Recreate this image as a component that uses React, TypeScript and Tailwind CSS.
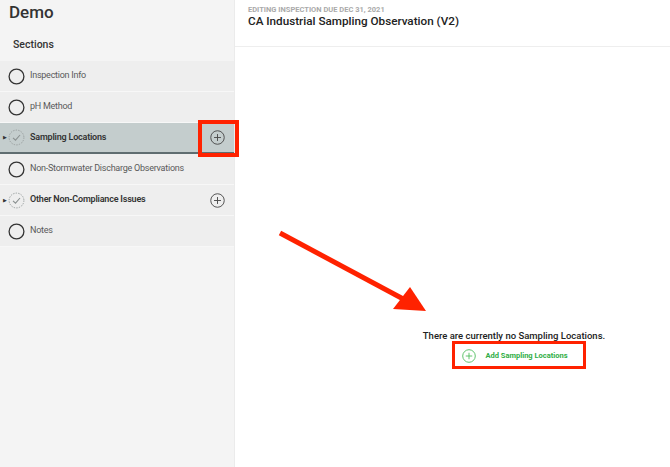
import React from "react";

const font = { fontFamily: "Roboto, 'Liberation Sans', sans-serif" };

function Circle() {
  return (
    <svg width="17" height="17" viewBox="0 0 17 17" className="shrink-0">
      <circle cx="8.5" cy="8.5" r="7.4" fill="none" stroke="#333" strokeWidth="1.3" />
    </svg>
  );
}

function DashCheck() {
  return (
    <svg width="17" height="17" viewBox="0 0 17 17" className="shrink-0">
      <circle cx="8.5" cy="8.5" r="7.4" fill="none" stroke="#9aa0a0" strokeWidth="1" strokeDasharray="1.4 1.2" />
      <path d="M5 8.8 L7.5 11.2 L12 6" fill="none" stroke="#8a9090" strokeWidth="1.1" />
    </svg>
  );
}

function PlusCircle({ color = "#4a4a4a", size = 15 }: { color?: string; size?: number }) {
  return (
    <svg width={size} height={size} viewBox="0 0 16 16" className="shrink-0">
      <circle cx="8" cy="8" r="7.2" fill="none" stroke={color} strokeWidth="1" />
      <path d="M8 4.3 V11.7 M4.3 8 H11.7" stroke={color} strokeWidth="1" />
    </svg>
  );
}

function Row({
  label,
  bold,
  expandable,
  selected,
  plus,
}: {
  label: string;
  bold?: boolean;
  expandable?: boolean;
  selected?: boolean;
  plus?: boolean;
}) {
  return (
    <div
      className={
        selected
          ? "relative flex items-center h-[31px] bg-[#c4cdcd] border-b-2 border-[#5f6d70]"
          : "relative flex items-center h-[31px] bg-[#eeeeee] border-b border-[#f7f7f7]"
      }
    >
      <div className="w-[8px] flex justify-center">
        {expandable && <span className="text-[5px] text-[#333] leading-none ml-[2px]">▶</span>}
      </div>
      {expandable ? <DashCheck /> : <Circle />}
      <span
        className={
          bold
            ? "ml-[5px] text-[9px] tracking-[-0.2px] font-semibold text-[#333]"
            : "ml-[5px] text-[9px] tracking-[-0.25px] text-[#5a5a5a]"
        }
      >
        {label}
      </span>
      {plus && (
        <div className="ml-auto mr-[9px] flex items-center">
          <PlusCircle />
        </div>
      )}
    </div>
  );
}

export default function App() {
  return (
    <div className="relative flex w-[670px] h-[467px] bg-white overflow-hidden" style={font}>
      <aside className="w-[235px] h-full bg-[#f4f4f4] border-r border-[#ebebeb] flex flex-col shrink-0">
        <div className="pl-[9px] pt-[1px] h-[26px] text-[17px] font-medium text-[#333] leading-[22px]">Demo</div>
        <div className="pl-[13px] pt-[11px] h-[35px] text-[10.5px] font-medium text-[#333]">Sections</div>
        <div className="flex flex-col">
          <Row label="Inspection Info" />
          <Row label="pH Method" />
          <Row label="Sampling Locations" bold expandable selected plus />
          <Row label="Non-Stormwater Discharge Observations" />
          <Row label="Other Non-Compliance Issues" bold expandable plus />
          <Row label="Notes" />
        </div>
      </aside>

      <main className="flex-1 flex flex-col">
        <header className="h-[47px] border-b border-[#eeeeee] pl-[13px] pt-[6px]">
          <div className="text-[7.5px] font-bold text-[#aaaaaa] uppercase leading-[8px]">
            Editing Inspection Due Dec 31, 2021
          </div>
          <div className="text-[11.7px] font-medium text-[#222] leading-[14px]">
            CA Industrial Sampling Observation (V2)
          </div>
        </header>
        <div className="flex-1 flex flex-col items-center pl-[123px] pt-[282px]">
          <div className="text-[9.5px] font-medium text-[#222] leading-[13px]">
            There are currently no Sampling Locations.
          </div>
          <div className="mt-[7px] flex items-center gap-[9px] ml-[2px]">
            <PlusCircle color="#4cbb5a" size={14} />
            <span className="text-[7.5px] font-bold text-[#2fae45]">Add Sampling Locations</span>
          </div>
        </div>
      </main>

      {/* annotation overlays */}
      <div className="absolute left-[198px] top-[120px] w-[41px] h-[37px] border-[4px] border-[#ff2200]" />
      <div className="absolute left-[452px] top-[341px] w-[134px] h-[28px] border-[3px] border-[#ff2200]" />
      <svg className="absolute left-0 top-0" width="670" height="467" viewBox="0 0 670 467">
        <line x1="280" y1="233" x2="407" y2="301" stroke="#ff2200" strokeWidth="5" />
        <polygon points="426,311 393,309 410,287" fill="#ff2200" />
      </svg>
    </div>
  );
}
